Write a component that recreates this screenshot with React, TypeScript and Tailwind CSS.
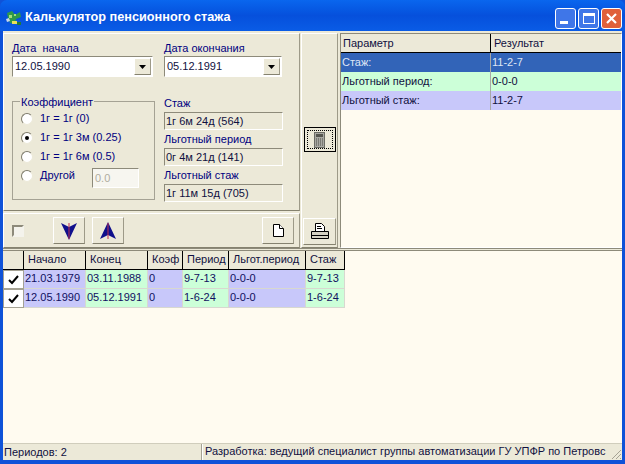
import React from 'react';

const raised = 'border border-t-white border-l-white border-r-[#9d9a88] border-b-[#85826f]';
const sunken = 'border border-t-[#8d8a7a] border-l-[#8d8a7a] border-r-white border-b-white';

const GREEN = 'bg-[#ccffd8]';
const BLUE = 'bg-[#c8c8fa]';

const logGrid = [
  { title: 'Начало', w: 'w-[62px]', color: BLUE, cells: ['21.03.1979', '12.05.1990'] },
  { title: 'Конец', w: 'w-[62px]', color: GREEN, cells: ['03.11.1988', '05.12.1991'] },
  { title: 'Коэф', w: 'w-[35px]', color: BLUE, cells: ['0', '0'] },
  { title: 'Период', w: 'w-[46px]', color: GREEN, cells: ['9-7-13', '1-6-24'] },
  { title: 'Льгот.период', w: 'w-[77px]', color: BLUE, cells: ['0-0-0', '0-0-0'] },
  { title: 'Стаж', w: 'w-[39px]', color: GREEN, cells: ['9-7-13', '1-6-24'] },
];

const results = [
  { name: 'Стаж:', value: '11-2-7', row: 'bg-[#3264b8] text-[#dfe6f5]' },
  { name: 'Льготный период:', value: '0-0-0', row: `${GREEN} text-[#101040]` },
  { name: 'Льготный стаж:', value: '11-2-7', row: `${BLUE} text-[#101040]` },
];

const infoBoxes = [
  { label: 'Стаж', value: '1г 6м 24д (564)' },
  { label: 'Льготный период', value: '0г 4м 21д (141)' },
  { label: 'Льготный стаж', value: '1г 11м 15д (705)' },
];

const radios = [
  { label: '1г = 1г (0)', checked: false },
  { label: '1г = 1г 3м (0.25)', checked: true },
  { label: '1г = 1г 6м (0.5)', checked: false },
];

function DateCombo({ label, value, width }: { label: string; value: string; width: string }) {
  return (
    <div className={width}>
      <div className="h-[14px] leading-[14px] text-[#000080] whitespace-pre">{label}</div>
      <div className={`mt-[1px] h-[21px] flex items-center bg-white pl-[2px] pr-[1px] text-[#101040] ${sunken}`}>
        <span className="flex-1">{value}</span>
        <span className={`w-[17px] h-[17px] bg-[#ece9d8] flex items-center justify-center ${raised}`}>
          <svg width="7" height="4" viewBox="0 0 7 4"><path d="M0 0h7L3.500 4z" fill="#000" /></svg>
        </span>
      </div>
    </div>
  );
}

function Radio({ checked }: { checked?: boolean }) {
  return (
    <span className="w-[12px] h-[12px] rounded-full bg-white border border-t-[#7d7a6a] border-l-[#7d7a6a] border-r-[#ece9d8] border-b-[#ece9d8] flex items-center justify-center shrink-0">
      {checked && <span className="w-[4px] h-[4px] rounded-full bg-black" />}
    </span>
  );
}

function ToolButton({ children, className }: { children: React.ReactNode; className: string }) {
  return <div className={`h-[27px] flex items-center justify-center bg-[#ece9d8] ${raised} ${className}`}>{children}</div>;
}

function ArrowDown() {
  return (
    <svg width="16" height="18" viewBox="0 0 16 18">
      <path d="M0 1l8 4 8-4-8 17z" fill="#10108c" />
      <path d="M8 1v16" stroke="#c03050" strokeWidth="1" />
    </svg>
  );
}

function ArrowUp() {
  return (
    <svg width="16" height="18" viewBox="0 0 16 18">
      <path d="M0 17l8-4 8 4L8 0z" fill="#10108c" />
      <path d="M8 1v16" stroke="#c03050" strokeWidth="1" />
    </svg>
  );
}

function PageIcon() {
  return (
    <svg width="11" height="13" viewBox="0 0 11 13">
      <path d="M.5.500h6l4 4v8H.5z" fill="#fff" stroke="#000" />
      <path d="M6.500.500v4h4" fill="#fff" stroke="#000" />
    </svg>
  );
}

function PrinterIcon() {
  return (
    <svg width="18" height="17" viewBox="0 0 18 17">
      <path d="M4.500.500h6l3 3v5h-9z" fill="#fff" stroke="#000" />
      <path d="M6 3.500h4M6 5.500h5" stroke="#000" />
      <path d="M.5 8.500h17v7H.5z" fill="#d5d2c2" stroke="#000" />
      <path d="M1 12.500h16" stroke="#000" />
    </svg>
  );
}

function CalcIcon() {
  return (
    <svg width="11" height="16" viewBox="0 0 11 16">
      <rect x=".5" y=".5" width="10" height="15" fill="#a8a8a2" stroke="#6b6b64" />
      <rect x="2" y="2" width="7" height="3" fill="#55554f" />
      <path d="M2 7h7M2 9h7M2 11h7M2 13h7" stroke="#4a4a44" strokeDasharray="1 1" />
    </svg>
  );
}

function AppLogo() {
  return (
    <svg width="18" height="17" viewBox="0 0 18 17">
      <path d="M2 3l5-2 3 4 5-3 1 5-5 2-1 5-5-1-2-5z" fill="#2f9a4a" />
      <path d="M4 5h3v3H4zM9 4h2v2H9z" fill="#a6e07a" />
      <rect x="7" y="11" width="5" height="3" fill="#e8e05a" />
      <rect x="12" y="12" width="4" height="3" fill="#1f7a3a" />
      <path d="M1 9l3-1 1 3-3 1z" fill="#c9d8e8" />
    </svg>
  );
}

function WinButton({ className, children }: { className: string; children: React.ReactNode }) {
  return <div className={`w-[21px] h-[21px] rounded-[3px] border border-white flex items-center justify-center ${className}`}>{children}</div>;
}

export default function App() {
  return (
    <div className="w-[625px] h-[464px] overflow-hidden flex flex-col bg-[#0f52d8] text-[11px] font-['Liberation_Sans',Arial,sans-serif]">
      {/* Title bar */}
      <div className="h-[31px] shrink-0 flex items-center pt-[5px] pl-[5px] pr-[3px] bg-gradient-to-b from-[#0a66ee] via-[#0650dc] to-[#0a5ce6] rounded-t-[7px]">
        <AppLogo />
        <span className="ml-[2px] text-white font-bold text-[12.700px]">Калькулятор пенсионного стажа</span>
        <div className="ml-auto flex gap-[2px]">
          <WinButton className="bg-[#3f76e8]">
            <span className="w-[8px] h-[3px] bg-white mt-[9px] -ml-[4px]" />
          </WinButton>
          <WinButton className="bg-[#3f76e8]">
            <span className="w-[12px] h-[11px] border border-white border-t-[3px]" />
          </WinButton>
          <WinButton className="bg-[#e0603a]">
            <svg width="11" height="11" viewBox="0 0 11 11"><path d="M1 1l9 9M10 1l-9 9" stroke="#fff" strokeWidth="2.200" /></svg>
          </WinButton>
        </div>
      </div>

      {/* Client area */}
      <div className="flex-1 min-h-0 mx-[3px] mb-[4px] flex flex-col bg-[#ece9d8] text-[#101040]">
        <div className="h-[218px] shrink-0 flex border-b border-b-[#8d8a7a]">
          {/* Left side */}
          <div className="w-[297px] shrink-0 pt-[2px] flex flex-col">
            <div className={`h-[178px] pl-[8px] pt-[7px] ${raised}`}>
              <div className="flex gap-[11px]">
                <DateCombo label="Дата  начала" value="12.05.1990" width="w-[141px]" />
                <DateCombo label="Дата окончания" value="05.12.1991" width="w-[118px]" />
              </div>
              <div className="flex mt-[20px]">
                {/* Coefficient group */}
                <div className="relative w-[143px] h-[99px] mt-[4px] border border-[#a5a294] pl-[8px] pt-[10px] text-[#000080]">
                  <span className="absolute left-[7px] -top-[6px] bg-[#ece9d8] px-[1px] leading-[13px]">Коэффициент</span>
                  <div className="flex flex-col gap-[6px]">
                    {radios.map((r) => (
                      <div key={r.label} className="h-[13px] flex items-center gap-[7px] whitespace-nowrap">
                        <Radio checked={r.checked} />
                        <span>{r.label}</span>
                      </div>
                    ))}
                    <div className="h-[13px] flex items-center">
                      <Radio />
                      <span className="ml-[7px] w-[52px]">Другой</span>
                      <span className={`w-[47px] h-[20px] mt-[5px] bg-[#f7f6f0] pl-[2px] text-[#b0ad9f] leading-[18px] ${sunken}`}>0.0</span>
                    </div>
                  </div>
                </div>
                {/* Results */}
                <div className="ml-[9px] w-[119px] -mt-[1px]">
                  {infoBoxes.map((b, i) => (
                    <div key={b.label} className={i > 0 ? 'mt-[2px]' : ''}>
                      <div className="h-[14px] leading-[14px] text-[#000080]">{b.label}</div>
                      <div className={`mt-[2px] h-[18px] pl-[1px] leading-[16px] text-[#101040] bg-[#ece9d8] ${sunken}`}>{b.value}</div>
                    </div>
                  ))}
                </div>
              </div>
            </div>
            <div className={`flex-1 mt-[2px] flex items-center pl-[8px] ${raised}`}>
              <span className="w-[12px] h-[12px] bg-[#f4f3ec] border-2 border-t-[#8d8a7a] border-l-[#8d8a7a] border-r-[#f4f3ec] border-b-[#f4f3ec]" />
              <ToolButton className="w-[32px] ml-[29px]"><ArrowDown /></ToolButton>
              <ToolButton className="w-[32px] ml-[7px]"><ArrowUp /></ToolButton>
              <ToolButton className="w-[32px] ml-[138px]"><PageIcon /></ToolButton>
            </div>
          </div>

          {/* Middle buttons */}
          <div className={`w-[37px] shrink-0 ml-[1px] mt-[2px] flex flex-col items-center ${raised}`}>
            <div className="mt-[93px] w-[32px] h-[25px] p-[2px] bg-[#ece9d8] border border-black">
              <div className="h-full border border-dotted border-black flex items-center justify-center">
                <CalcIcon />
              </div>
            </div>
            <ToolButton className="w-[33px] mt-[66px]"><PrinterIcon /></ToolButton>
          </div>

          {/* Result grid */}
          <div className={`flex-1 ml-[2px] mt-[2px] bg-[#fffbf0] ${sunken}`}>
            <div className="h-[19px] flex bg-[#ece9d8] border-b border-b-black leading-[18px]">
              <div className="w-[150px] pl-[2px] border-r border-r-black">Параметр</div>
              <div className="pl-[3px]">Результат</div>
            </div>
            {results.map((r) => (
              <div key={r.name} className={`h-[19px] flex leading-[18px] ${r.row}`}>
                <div className="w-[150px] pl-[1px] border-r border-r-[#a8a8a8]">{r.name}</div>
                <div className="pl-[1px]">{r.value}</div>
              </div>
            ))}
          </div>
        </div>

        {/* Periods grid */}
        <div className="flex-1 min-h-0 mt-[1px] bg-[#fffbf0] border-t border-t-[#8d8a7a] flex">
          <div className="w-[21px] shrink-0">
            <div className="h-[19px] bg-[#ece9d8] border-b border-b-black border-r border-r-black" />
            {[0, 1].map((i) => (
              <div key={i} className="h-[19px] bg-white border border-[#a5a294] flex items-center justify-center">
                <svg width="11" height="10" viewBox="0 0 11 10"><path d="M1 5l3 3 6-7" fill="none" stroke="#000" strokeWidth="2" /></svg>
              </div>
            ))}
          </div>
          {logGrid.map((col) => (
            <div key={col.title} className={`${col.w} shrink-0`}>
              <div className="h-[19px] pl-[4px] bg-[#ece9d8] border-b border-b-black border-r border-r-black leading-[16px] whitespace-nowrap">{col.title}</div>
              {col.cells.map((c, i) => (
                <div key={i} className={`h-[19px] pl-[1px] leading-[16px] text-[#101060] ${col.color} border-r border-b border-[#d8d8d0]`}>{c}</div>
              ))}
            </div>
          ))}
        </div>

        {/* Status bar */}
        <div className="h-[17px] shrink-0 flex border-t border-t-[#d0cdbc] bg-[#ece9d8] leading-[17px] text-[#101040]">
          <div className="w-[199px] pl-[1px] border-r border-r-[#a5a294]">Периодов: 2</div>
          <div className="flex-1 min-w-0 flex items-end whitespace-nowrap pl-[2px] border-l border-l-white">
            <span className="flex-1">Разработка: ведущий специалист группы автоматизации ГУ УПФР по Петровс</span>
            <svg width="12" height="12" viewBox="0 0 12 12" className="shrink-0">
              <path d="M11 2l-9 9M11 6l-5 5M11 10l-1 1" stroke="#a5a294" />
            </svg>
          </div>
        </div>
      </div>
    </div>
  );
}
